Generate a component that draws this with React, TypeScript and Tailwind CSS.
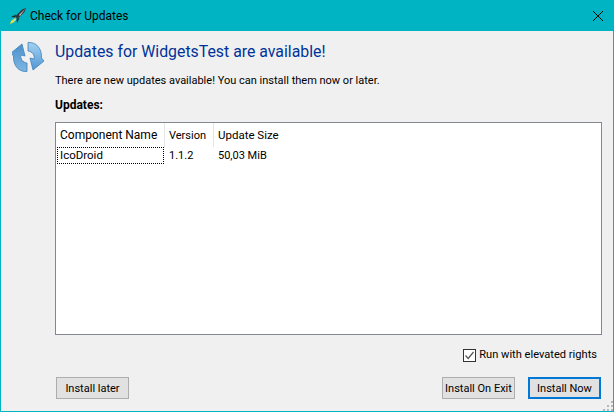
const font = "[font-family:'Roboto','Noto_Sans',sans-serif]";

const RocketIcon = () => (
  <svg width="18" height="18" viewBox="0 0 18 18" className="shrink-0">
    <path d="M6 11 L2 14 L1 17 L4.5 15.5 L7.5 12.5 Z" fill="#e6dd3e" />
    <path d="M6 12 L4 14 L6 14 Z" fill="#9ad6e8" />
    <path d="M7 7.5 L2 10 L6 10.5 Z" fill="#24262a" />
    <path d="M10.5 11 L8 16 L7.5 12 Z" fill="#24262a" />
    <path d="M17 1 L13 2.5 L6 9.5 L8.5 12 L15.5 5 Z" fill="#33363b" />
    <path d="M16.5 1.5 L10 8 L11 9 Z" fill="#c8ccd0" />
  </svg>
);

const RefreshIcon = () => (
  <svg width="32" height="34" viewBox="0 0 32 34" className="shrink-0">
    <defs>
      <linearGradient id="arrowA" x1="0" y1="0" x2="0" y2="1">
        <stop offset="0" stopColor="#a5d2f2" />
        <stop offset="1" stopColor="#4f97d3" />
      </linearGradient>
      <linearGradient id="arrowB" x1="0" y1="0" x2="0" y2="1">
        <stop offset="0" stopColor="#7fb6e2" />
        <stop offset="1" stopColor="#4a90cc" />
      </linearGradient>
    </defs>
    <path
      d="M16 1.5 C24 1 30 7 29.5 17 L32 20 L21 29 L18 17 L22 18 C23 14 20 10.5 16 10 Z"
      fill="url(#arrowA)"
      stroke="#3f80b8"
      strokeWidth="0.8"
    />
    <path
      d="M16 1.5 C24 1 30 7 29.5 17 L32 20 L21 29 L18 17 L22 18 C23 14 20 10.5 16 10 Z"
      fill="url(#arrowB)"
      stroke="#3f80b8"
      strokeWidth="0.8"
      transform="rotate(180 15.5 16)"
    />
  </svg>
);

const Button = ({ label, primary }: { label: string; primary?: boolean }) => (
  <button
    className={
      primary
        ? "h-[22px] w-[73px] whitespace-nowrap border-2 border-[#0078d7] bg-[#e1e1e1] text-[11px] leading-none text-black"
        : "h-[22px] w-[73px] whitespace-nowrap border border-[#adadad] bg-[#e1e1e1] text-[11px] leading-none text-black"
    }
  >
    {label}
  </button>
);

export default function App() {
  return (
    <div className={`${font} relative flex h-[412px] w-[614px] flex-col overflow-hidden border-x border-b border-[#00b4c3] bg-[#f0f0f0] text-black`}>
      <div className="-mx-px flex h-[31px] shrink-0 items-center bg-[#00b4c3] pl-[9px] pr-[11px]">
        <RocketIcon />
        <span className="ml-[3px] text-[12px]">Check for Updates</span>
        <svg width="10" height="10" viewBox="0 0 10 10" className="ml-auto">
          <path d="M0 0 L10 10 M10 0 L0 10" stroke="#000" strokeWidth="1" fill="none" />
        </svg>
      </div>

      <div className="flex min-h-0 flex-1 flex-col pb-3 pl-[11px] pr-[11px]">
        <div className="flex flex-1 flex-col">
          <div className="flex pt-[10px]">
            <RefreshIcon />
            <div className="ml-[11px] flex-1">
              <h1 className="text-[15.85px] leading-[22px] text-[#003399]">Updates for WidgetsTest are available!</h1>
              <p className="mt-[10px] text-[11px] leading-4">There are new updates available! You can install them now or later.</p>
              <p className="mt-[8px] text-[12px] font-bold leading-4">Updates:</p>
            </div>
          </div>

          <div className="ml-[43px] mt-[9px] h-[213px] border border-[#828790] bg-white text-[11.5px]">
            <div className="flex h-[24px]">
              <div className="flex w-[109px] items-center border-r border-[#e5e5e5] pl-[4px] text-[12px]">Component Name</div>
              <div className="flex w-[49px] items-center border-r border-[#e5e5e5] pl-[4px] pt-[3px] text-[11px]">Version</div>
              <div className="flex items-center pl-[4px] pt-px">Update Size</div>
            </div>
            <div className="flex h-[17px] items-center">
              <div className="ml-[1px] flex h-[17px] w-[107px] items-center border border-dotted border-black pl-[2px]">IcoDroid</div>
              <div className="w-[50px] pl-[5px] pt-px text-[11px]">1.1.2</div>
              <div className="pl-[4px] pt-px text-[11px]">50,03 MiB</div>
            </div>
          </div>

          <label className="mt-[12px] flex items-center justify-end pr-[5px] text-[11.1px]">
            <span className="flex h-[13px] w-[13px] items-center justify-center border border-[#333] bg-white">
              <svg width="11" height="11" viewBox="0 0 11 11">
                <path d="M1.5 5.5 L4.2 8.5 L9.5 2" stroke="#555" strokeWidth="1.2" fill="none" />
              </svg>
            </span>
            <span className="ml-[3px]">Run with elevated rights</span>
          </label>
        </div>

        <div className="ml-[44px] flex items-center pr-[1px]">
          <Button label="Install later" />
          <div className="ml-auto flex gap-[13px]">
            <Button label="Install On Exit" />
            <Button label="Install Now" primary />
          </div>
        </div>
      </div>

      <svg width="10" height="10" viewBox="0 0 10 10" className="absolute bottom-0 right-0">
        <path d="M8 0h2v2H8z M4 4h2v2H4z M8 4h2v2H8z M0 8h2v2H0z M4 8h2v2H4z M8 8h2v2H8z" fill="#b8b8b8" />
      </svg>
    </div>
  );
}
